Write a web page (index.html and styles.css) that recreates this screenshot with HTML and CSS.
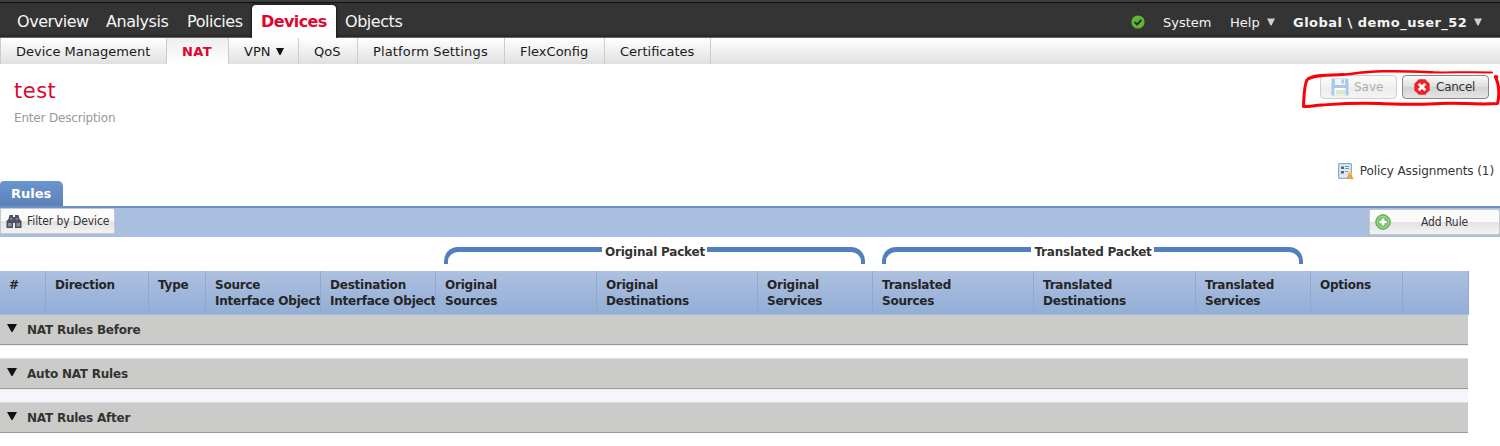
FILE: index.html
```html
<!DOCTYPE html>
<html lang="en">
<head>
<meta charset="utf-8">
<title>NAT Policy</title>
<link rel="stylesheet" href="styles.css">
</head>
<body>
<header class="topbar">
  <nav class="main-nav">
    <a class="m-overview"><span>Overview</span></a>
    <a class="m-analysis"><span>Analysis</span></a>
    <a class="m-policies"><span>Policies</span></a>
    <a class="m-devices active"><span>Devices</span></a>
    <a class="m-objects"><span>Objects</span></a>
  </nav>
  <div class="user-nav">
    <svg class="status" width="14" height="14" viewBox="0 0 14 14"><circle cx="7" cy="7" r="6.6" fill="#5fb336"/><path d="M3.7 7.1 6.1 9.5 10.3 4.9" fill="none" stroke="#222" stroke-width="1.8"/></svg>
    <span class="u-system">System</span>
    <span class="u-help">Help</span>
    <svg class="caret" width="8" height="8" viewBox="0 0 8 8"><path d="M0 .5h8L4.500 7.500h-1z" fill="#d0d0d0"/></svg>
    <span class="u-domain">Global \ demo_user_52</span>
    <svg class="caret" width="8" height="8" viewBox="0 0 8 8"><path d="M0 .5h8L4.500 7.500h-1z" fill="#d0d0d0"/></svg>
  </div>
</header>
<nav class="sub-nav">
  <a class="s-dm"><span>Device Management</span></a>
  <a class="s-nat active"><span>NAT</span></a>
  <a class="s-vpn"><span>VPN</span><svg width="8" height="7" viewBox="0 0 8 7"><path d="M0 0h8L4.500 7h-1z" fill="#111"/></svg></a>
  <a class="s-qos"><span>QoS</span></a>
  <a class="s-ps"><span>Platform Settings</span></a>
  <a class="s-fc"><span>FlexConfig</span></a>
  <a class="s-cert"><span>Certificates</span></a>
</nav>
<section class="policy-head">
  <div class="policy-info">
    <h1><span>test</span></h1>
    <p><span>Enter Description</span></p>
  </div>
  <div class="actions">
    <button class="btn save" disabled>
      <svg width="18" height="18" viewBox="0 0 18 18"><path d="M.5.5h16L17.500 2v15.500H.5z" fill="#2f74cc"/><path d="M4 1h10v6H4z" fill="#dbe8f8"/><path d="M10.500 1.500h2.500v4h-2.500z" fill="#2f74cc"/><path d="M3.500 10h11v7.500h-11z" fill="#f4f8fc"/><path d="M5 12h9v4.500H5z" fill="#9fc978"/></svg>
      <span>Save</span>
    </button>
    <button class="btn cancel">
      <svg width="16" height="16" viewBox="0 0 16 16"><path d="M4.800.3h6.400l4.500 4.500v6.400l-4.500 4.500H4.800L.3 11.200V4.800z" fill="#f02226"/><path d="m4.700 4.700 6.600 6.600m0-6.600-6.600 6.600" stroke="#fff" stroke-width="2.700"/></svg>
      <span>Cancel</span>
    </button>
    <svg class="highlight" width="200" height="42" viewBox="0 0 200 42" fill="none" stroke="#fb0007" stroke-linecap="round" stroke-linejoin="round"><path stroke-width="2" d="M192 3.500C168 2.500 148 4 132 3.300"/><path stroke-width="2.600" d="M132 3.300C115 2.500 101 1.800 82 2.300S52 5 43 5.500"/><path stroke-width="3" d="M43 5.500C27 6 10 6 7 11S4 26 3.500 37.500C9 38 13 36.500 22 36S50 33.500 80 34.500s42 1.500 60 0 32 1.500 57.500 0C200 24 199 16 196 9"/><circle cx="196" cy="8" r="1.700" fill="#fb0007"/></svg>
  </div>
</section>
<section class="assignments">
  <svg width="16" height="17" viewBox="0 0 16 17"><path d="M.7.7h12.600v14.600H.7z" fill="#dceaf7" stroke="#7999bb"/><path d="M3 3.500h3v2.500H3zm0 4.500h3v2.500H3z" fill="#567"/><path d="M7 3.500h4M7 5.500h4M7 8.500h3" stroke="#78909f"/><circle cx="12" cy="11.300" r="2.200" fill="#f6b64b"/><path d="m10.300 12-1.800 4 2-.3 1.500-2 1.500 2.800 2-.5-2-4z" fill="#f39b25"/></svg>
  <span>Policy Assignments (1)</span>
</section>
<div class="tabs"><a class="tab"><span>Rules</span></a></div>
<div class="toolbar">
  <button class="tool filter">
    <svg width="16" height="15" viewBox="0 0 16 15"><path d="M3.500 1h3.500v2h2V1h3.500l1 4 2 2v7H9V9H7v5H.5V7l2-2z" fill="#4c535e"/><path d="M2 9h3.500v3.500H2zm8.500 0H14v3.500h-3.500z" fill="#8794a6"/><path d="M4 5h2.500m3 0H12" stroke="#a4afbc"/></svg>
    <span>Filter by Device</span>
  </button>
  <button class="tool add">
    <svg width="16" height="16" viewBox="0 0 16 16"><circle cx="8" cy="8" r="7.300" fill="#79bd68" stroke="#5ba652"/><circle cx="8" cy="8" r="5.700" fill="none" stroke="#acd99d"/><path d="M8 4.500v7M4.500 8h7" stroke="#fff" stroke-width="2.600"/></svg>
    <span>Add Rule</span>
  </button>
</div>
<div class="groups">
  <div class="group original"><i></i><span>Original Packet</span><i></i></div>
  <div class="group translated"><i></i><span>Translated Packet</span><i></i></div>
</div>
<div class="grid">
  <div class="columns">
    <div><span>#</span></div>
    <div><span>Direction</span></div>
    <div><span>Type</span></div>
    <div><span>Source</span><span>Interface Objects</span></div>
    <div><span>Destination</span><span>Interface Objects</span></div>
    <div><span>Original</span><span>Sources</span></div>
    <div><span>Original</span><span>Destinations</span></div>
    <div><span>Original</span><span>Services</span></div>
    <div><span>Translated</span><span>Sources</span></div>
    <div><span>Translated</span><span>Destinations</span></div>
    <div><span>Translated</span><span>Services</span></div>
    <div><span>Options</span></div>
    <div></div>
  </div>
  <div class="section"><svg width="10" height="8" viewBox="0 0 10 8"><path d="M0 0h10L5.500 8h-1z" fill="#111"/></svg><span>NAT Rules Before</span></div>
  <div class="gap"></div>
  <div class="section"><svg width="10" height="8" viewBox="0 0 10 8"><path d="M0 0h10L5.500 8h-1z" fill="#111"/></svg><span>Auto NAT Rules</span></div>
  <div class="gap tinted"></div>
  <div class="section"><svg width="10" height="8" viewBox="0 0 10 8"><path d="M0 0h10L5.500 8h-1z" fill="#111"/></svg><span>NAT Rules After</span></div>
</div>
</body>
</html>
```
FILE: styles.css
```css
* { box-sizing: border-box; }
body { margin: 0; height: 446px; overflow: hidden; background: #fff; color: #333; font-family: "DejaVu Sans", Verdana, sans-serif; font-size: 12px; }
span { white-space: nowrap; }
svg { flex: none; display: block; }
button { font-family: inherit; }
.topbar { height: 38px; display: flex; justify-content: space-between; background: linear-gradient(#3c3f3e 0 2px, #111 2px 3px, #343434 3px 34px, #232323 37px, #666 37px); color: #f4f4f4; }
.main-nav { display: flex; padding: 5px 0 0 8px; font-size: 16px; letter-spacing: -.45px; }
.main-nav a { height: 33px; line-height: 33px; padding-left: 9px; }
.m-overview { width: 89px; }
.m-analysis { width: 81px; }
.m-policies { width: 74px; }
.main-nav .m-devices { width: 84px; padding-left: 9px; }
.main-nav .active { background: #fff; color: #dc0630; font-weight: bold; border-radius: 4px 4px 0 0; box-shadow: 0 0 2px 1px #191919; clip-path: inset(-3px -3px 0); }
.m-devices span { letter-spacing: -.6px; }
.user-nav { display: flex; align-items: center; padding: 6px 18px 0 0; font-size: 13px; }
.status { margin-right: 18px; }
.u-system { width: 67px; }
.u-help { width: 37px; }
.u-domain { width: 181px; font-weight: bold; margin-left: 18px; letter-spacing: .48px; }
.caret { flex: none; }
.sub-nav { display: flex; height: 26px; background: linear-gradient(#fff, #e0e0e0); font-size: 13px; color: #1a1a1a; border-left: 1px solid #ccc; }
.sub-nav a { border-right: 1px solid #ccc; padding-left: 15px; line-height: 27px; height: 26px; display: flex; align-items: center; }
.s-dm { width: 166px; }
.s-nat { width: 62px; }
.s-vpn { width: 70px; gap: 6px; }
.s-nat span { letter-spacing: .4px; }
.s-qos { width: 59px; }
.s-ps { width: 147px; letter-spacing: .15px; }
.s-fc { width: 100px; }
.s-cert { width: 106px; }
.sub-nav .active { background: linear-gradient(#eee, #fff); color: #dc0630; font-weight: bold; }
.policy-head { display: flex; justify-content: space-between; height: 97px; }
.policy-info { padding: 14px 0 0 14px; }
h1 { margin: 0; font-size: 21px; font-weight: normal; line-height: 26px; letter-spacing: .5px; color: #dc0630; }
p { margin: 7px 0 0; font-size: 12px; line-height: 14px; letter-spacing: -.18px; color: #999; }
.actions { position: relative; display: flex; gap: 5px; padding: 11px 11px 0 0; height: 40px; }
.btn { height: 24px; display: flex; align-items: center; padding: 0; border: 1px solid #888; border-radius: 4px; background: linear-gradient(#fafafa, #dedede 50%, #d2d2d2 51%, #e5e5e5); color: #333; font-size: 12px; }
.save { width: 77px; padding-left: 10px; gap: 5px; opacity: .4; }
.cancel { width: 87px; padding-left: 11px; gap: 6px; letter-spacing: -.25px; }
.highlight { position: absolute; right: 0; top: 5px; }
.assignments { height: 20px; display: flex; align-items: center; justify-content: flex-end; gap: 6px; padding-right: 6px; font-size: 12px; letter-spacing: -.08px; }
.tabs { height: 25px; border-bottom: 0; }
.tab { display: block; width: 63px; height: 25px; padding-left: 11px; line-height: 26px; background: linear-gradient(#6a95cf, #5d81b8); border-radius: 4px 5px 0 0; color: #fff; font-size: 13px; font-weight: bold; }
.toolbar { height: 31px; display: flex; justify-content: space-between; background: #aabfe0; border-top: 2px solid #6b91c7; }
.tool { height: 26px; display: flex; align-items: center; padding: 0; border: 1px solid #c8c8c8; border-radius: 2px; background: linear-gradient(#fbfbfb 0 48%, #e3e3e3 50%, #f3f3f3); color: #333; font-family: "DejaVu Sans Condensed", "DejaVu Sans", sans-serif; font-stretch: condensed; font-size: 12px; letter-spacing: -.08px; }
.filter { width: 115px; padding-left: 5px; gap: 5px; }
.add { width: 131px; margin-top: 1px; padding-left: 5px; }
.add span { margin-left: 30px; }
.groups { height: 34px; display: flex; gap: 17px; padding: 7px 0 0 444px; font-size: 12px; font-weight: bold; letter-spacing: -.2px; }
.group { width: 421px; display: flex; justify-content: center; }
.group i { flex: 1; height: 17px; margin-top: 3px; border-top: 5px solid #5380bc; border-left: 4px solid #5380bc; border-radius: 14px 0 0; }
.group i:last-child { border-left: 0; border-right: 4px solid #5380bc; border-radius: 0 14px 0 0; }
.group span { line-height: 17px; padding: 0 2px 0 3px; }
.grid { width: 1469px; font-weight: bold; font-size: 12px; letter-spacing: -.22px; }
.columns { height: 44px; display: grid; grid-template-columns: 46px 103px 57px 115px 115px 161px 161px 115px 161px 162px 115px 92px 66px; background: linear-gradient(#adc0e0, #93aed6); border-bottom: 1px solid #a5bce0; color: #252525; }
.columns div { border-right: 1px solid #90a8ce; overflow: hidden; padding: 7px 0 0 9px; }
.columns span { display: block; line-height: 15.500px; }
.section { width: 1468px; height: 30px; display: flex; align-items: center; gap: 10px; padding: 0 0 0 7px; background: #cbcbc9; border-bottom: 1px solid #999; }
.section svg { margin-bottom: 3px; }
.gap { width: 1468px; height: 14px; background: #fff; border-top: 1px solid #eee; border-bottom: 1px solid #ddd; }
.tinted { background: #f4f6fc; }
```
